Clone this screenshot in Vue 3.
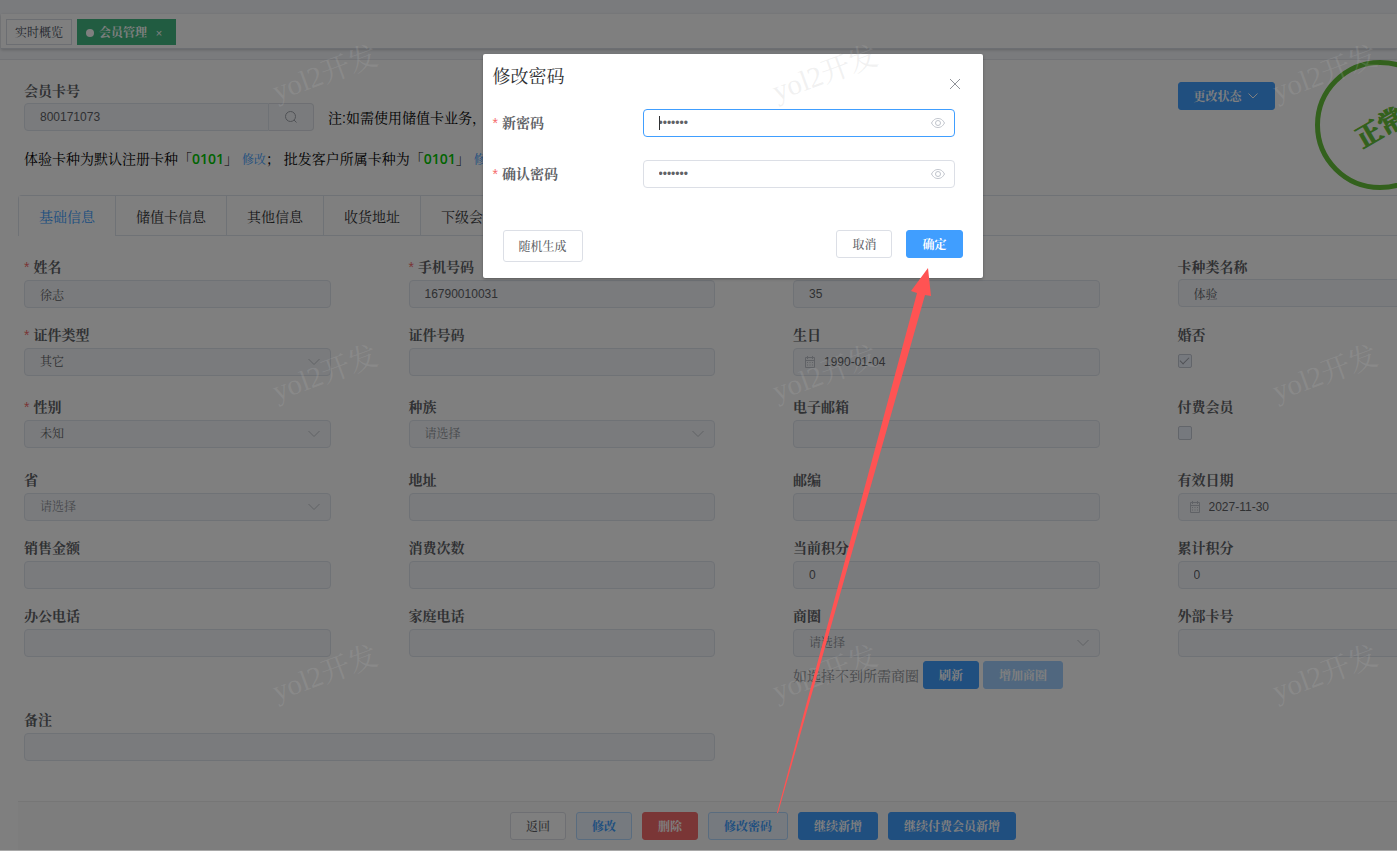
<script setup>
import { ref } from 'vue'

const cardNo = ref('800171073')
const newPassword = ref('1234567')
const confirmPassword = ref('1234567')

const tabs = ['基础信息', '储值卡信息', '其他信息', '收货地址', '下级会员']

const rows = [
  { kind: 'r68', cells: [
    { label: '姓名', required: true, value: '徐志' },
    { label: '手机号码', required: true, value: '16790010031' },
    { label: '年龄', value: '35' },
    { label: '卡种类名称', value: '体验', raised: true },
  ] },
  { kind: 'r72', cells: [
    { label: '证件类型', required: true, type: 'select', value: '其它' },
    { label: '证件号码', value: '' },
    { label: '生日', type: 'date', value: '1990-01-04' },
    { label: '婚否', type: 'check', value: true },
  ] },
  { kind: 'r73', cells: [
    { label: '性别', required: true, type: 'select', value: '未知' },
    { label: '种族', type: 'select', value: '请选择', empty: true },
    { label: '电子邮箱', value: '' },
    { label: '付费会员', type: 'check', value: false },
  ] },
  { kind: 'r68', cells: [
    { label: '省', type: 'select', value: '请选择', empty: true },
    { label: '地址', value: '' },
    { label: '邮编', value: '' },
    { label: '有效日期', type: 'date', value: '2027-11-30' },
  ] },
  { kind: 'r68', cells: [
    { label: '销售金额', value: '' },
    { label: '消费次数', value: '' },
    { label: '当前积分', value: '0' },
    { label: '累计积分', value: '0' },
  ] },
  { kind: 'r104', cells: [
    { label: '办公电话', value: '' },
    { label: '家庭电话', value: '' },
    { label: '商圈', type: 'select', value: '请选择', empty: true, area: true },
    { label: '外部卡号', value: '' },
  ] },
]

const marks = [0, 1, 2, 3, 4, 5, 6, 7, 8]
</script>

<template>
  <div class="page">
    <div class="navbar"></div>
    <nav class="tags">
      <a href="#" class="tag">实时概览</a>
      <a href="#" class="tag active"><i class="dot"></i>会员管理<span class="x">×</span></a>
    </nav>

    <main class="main">
      <section class="head">
        <div class="head-left">
          <label class="label" for="card">会员卡号</label>
          <div class="card-row">
            <div class="card-search">
              <input id="card" v-model="cardNo" class="field" disabled />
              <button class="search" type="button" aria-label="搜索">
                <svg viewBox="0 0 14 14"><circle cx="6.500" cy="6.500" r="5" /><path d="M10 10l2.500 2.500" /></svg>
              </button>
            </div>
            <p class="note">注:如需使用储值卡业务，</p>
          </div>
        </div>
        <div class="head-right">
          <button class="btn primary status" type="button">更改状态
            <svg viewBox="0 0 12 12"><path d="M1.500 3.500l4.500 4.500 4.500-4.500" /></svg>
          </button>
          <div class="stamp"><span>正常</span></div>
        </div>
      </section>

      <p class="kinds">
        体验卡种为默认注册卡种<span>「</span><b>0101</b><span>」</span> <a href="#">修改</a>；
        <span>批发客户所属卡种为「</span><b>0101</b><span>」</span> <a href="#">修改</a>
      </p>

      <div class="tabs" role="tablist">
        <button v-for="(t, i) in tabs" :key="t" type="button" role="tab" class="tab" :class="{ on: i === 0 }">{{ t }}</button>
      </div>

      <form class="form" @submit.prevent>
        <div v-for="(row, r) in rows" :key="r" class="row" :class="row.kind">
          <div v-for="(c, k) in row.cells" :key="c.label" class="cell">
            <label class="label" :class="{ raised: c.raised }" :for="`f${r}-${k}`"><i v-if="c.required">*</i>{{ c.label }}</label>
            <div v-if="c.type === 'select'" class="wrap">
              <select :id="`f${r}-${k}`" class="field" :class="{ empty: c.empty }" disabled><option>{{ c.value }}</option></select>
              <svg class="chev" viewBox="0 0 12 12"><path d="M.5 3L6 8.500 11.500 3" /></svg>
            </div>
            <div v-else-if="c.type === 'date'" class="wrap date">
              <svg class="cal" viewBox="0 0 12 12"><path d="M1.500 1.500h9v10h-9zM1.500 4.500h9M3.500 0v3M8.500 0v3M3 6.500h1M5.500 6.500h1M8 6.500h1M3 9h1M5.500 9h1M8 9h1" /></svg>
              <input :id="`f${r}-${k}`" class="field" :value="c.value" disabled />
            </div>
            <input v-else-if="c.type === 'check'" :id="`f${r}-${k}`" type="checkbox" class="check" :checked="c.value" disabled />
            <input v-else :id="`f${r}-${k}`" class="field" :value="c.value" disabled />
            <div v-if="c.area" class="area">
              <span>如选择不到所需商圈</span>
              <button class="btn primary" type="button">刷新</button>
              <button class="btn primary faded" type="button">增加商圈</button>
            </div>
          </div>
        </div>
        <div class="row">
          <div class="cell wide">
            <label class="label" for="remark">备注</label>
            <input id="remark" class="field" disabled />
          </div>
        </div>
      </form>

      <footer class="footer">
        <button class="btn" type="button">返回</button>
        <button class="btn plain" type="button">修改</button>
        <button class="btn danger" type="button">删除</button>
        <button class="btn plain" type="button">修改密码</button>
        <button class="btn primary" type="button">继续新增</button>
        <button class="btn primary" type="button">继续付费会员新增</button>
      </footer>
    </main>
    <div class="mask"></div>

    <section class="dialog" role="dialog" aria-labelledby="dlg-title">
      <header>
        <h2 id="dlg-title">修改密码</h2>
        <button type="button" class="close" aria-label="关闭">
          <svg viewBox="0 0 12 12"><path d="M1 1l10 10M11 1L1 11" /></svg>
        </button>
      </header>
      <div class="pw-row">
        <label class="label" for="pw1"><i>*</i>新密码</label>
        <div class="wrap pw focused">
          <input id="pw1" v-model="newPassword" type="password" class="field" />
          <i class="caret"></i>
          <svg class="eye" viewBox="0 0 16 12"><path d="M1.500 6C3.500 2.500 5.500 1.500 8 1.500s4.500 1 6.500 4.500c-2 3.500-4 4.500-6.500 4.500S3.500 9.500 1.500 6z" /><circle cx="8" cy="6" r="2.500" /></svg>
        </div>
      </div>
      <div class="pw-row">
        <label class="label" for="pw2"><i>*</i>确认密码</label>
        <div class="wrap pw">
          <input id="pw2" v-model="confirmPassword" type="password" class="field" />
          <svg class="eye" viewBox="0 0 16 12"><path d="M1.500 6C3.500 2.500 5.500 1.500 8 1.500s4.500 1 6.500 4.500c-2 3.500-4 4.500-6.500 4.500S3.500 9.500 1.500 6z" /><circle cx="8" cy="6" r="2.500" /></svg>
        </div>
      </div>
      <div class="dlg-foot">
        <button type="button" class="btn large">随机生成</button>
        <div class="right">
          <button type="button" class="btn">取消</button>
          <button type="button" class="btn primary">确定</button>
        </div>
      </div>
    </section>

    <div class="marks" aria-hidden="true"><div v-for="m in marks" :key="m" class="mark"><span>yol2开发</span></div></div>
    <svg class="arrow" viewBox="0 0 170 560" aria-hidden="true"><path d="M158 1L141 24l6 2L7 546h1L155 28l6 1z" /></svg>
  </div>
</template>

<style>
body { margin: 0; background: #fff; }
html, body { overflow: hidden; }
</style>

<style scoped>
* { box-sizing: border-box; }
.page { position: relative; height: 100vh; overflow: hidden; display: flex; flex-direction: column; background: #f5f7fb; font-family: "Liberation Sans", "Noto Serif CJK SC", "Noto Sans CJK SC", sans-serif; font-size: 14px; color: #303133; }
button, input, select { font-family: inherit; margin: 0; }
a { text-decoration: none; color: #409eff; }
p { margin: 0; }
.navbar { flex: none; height: 14px; }
.tags { flex: none; height: 35px; margin-left: 1px; display: flex; align-items: center; gap: 5px; padding: 2px 5px 0; background: #fff; border-bottom: 1px solid #d8dce5; box-shadow: 0 1px 3px rgba(0, 0, 0, .2); }
.tag { height: 26px; line-height: 26px; padding: 0 8px; font-size: 12px; border: 1px solid #d8dce5; color: #495060; }
.tag.active { display: flex; align-items: center; padding-top: 2px; background: #42b983; border-color: #42b983; color: #fff; font-weight: 700; }
.dot { width: 8px; height: 8px; margin-right: 5px; border-radius: 50%; background: #fff; }
.x { width: 16px; margin-left: 4px; text-align: center; font-size: 11px; font-weight: 400; }
.main { flex: 1; display: flex; flex-direction: column; margin-top: 10px; padding-left: 18px; border-top: 1px solid #e4e7ed; background: #fff; }
.head { flex: none; display: grid; grid-template-columns: repeat(4, 1fr); width: 1544px; height: 85px; padding: 21px 0 0 6px; }
.head-left { grid-column: span 3; }
.head-right { position: relative; padding-top: 1px; }
.label { display: block; height: 20px; line-height: 20px; font-size: 14px; font-weight: 700; color: #606266; white-space: nowrap; }
.label i { font-style: normal; font-weight: 400; color: #f56c6c; margin-right: 4px; }
.card-row { display: flex; align-items: center; gap: 14px; margin-top: 2px; }
.card-search { display: flex; width: 290px; }
.card-search .field { flex: 1; border-radius: 4px 0 0 4px; }
.search { width: 45px; border: 1px solid #dcdfe6; border-left: 0; border-radius: 0 4px 4px 0; background: #f5f7fa; padding: 0; }
svg { fill: none; stroke: currentColor; }
.search svg { width: 14px; height: 14px; display: block; margin: auto; color: #a0a4ac; }
.note { font-size: 14px; white-space: nowrap; color: #000; }
.field { display: block; width: 100%; min-width: 0; height: 28px; padding: 0 15px; border: 1px solid #dfe4ed; border-radius: 4px; background: #f5f7fa; font-size: 12px; color: #606266; opacity: 1; outline: 0; appearance: none; }
.field.empty { color: #8f939b; }
.btn { height: 28px; padding: 1px 15px 0; border: 1px solid #dcdfe6; border-radius: 3px; background: #fff; color: #606266; font-size: 12px; font-weight: 500; line-height: 1; white-space: nowrap; }
.btn.primary, .btn.danger, .btn.plain { font-weight: 700; }
.btn.primary { background: #409eff; border-color: #409eff; color: #fff; }
.btn.plain { background: #ecf5ff; border-color: #b3d8ff; color: #409eff; }
.btn.danger { background: #f56c6c; border-color: #f56c6c; color: #fff; }
.btn.primary.faded { background: #a0cfff; border-color: #a0cfff; }
.btn.large { height: 32px; }
.status svg { width: 12px; height: 12px; vertical-align: -1px; margin-left: 2px; }
.stamp { position: absolute; left: 137px; top: -21px; width: 130px; height: 130px; border: 5px solid #67c23a; border-radius: 50%; display: flex; align-items: center; justify-content: center; color: #67c23a; font-size: 26px; font-weight: 700; -webkit-text-stroke: 1px #67c23a; }
.stamp span { transform: rotate(-30deg); white-space: nowrap; }
.kinds { height: 20px; line-height: 20px; margin: 4px 0 26px 6px; color: #000; white-space: nowrap; }
.kinds b { color: #00c800; font-family: "Open Sans", sans-serif; font-weight: 600; }
.kinds a { font-size: 12px; }
.tabs { flex: none; display: flex; height: 41px; border: 1px solid #dfe4ed; border-right: 0; border-radius: 4px 0 0; }
.tab { height: 40px; padding: 0 20px; border: 0; border-right: 1px solid #dfe4ed; background: transparent; font-size: 14px; color: #303133; }
.tab.on { color: #409eff; background: #fff; }
.form { flex: none; padding: 21px 0 0 6px; width: 1544px; }
.row { display: grid; grid-template-columns: repeat(4, 1fr); }
.r68 { height: 68px; }
.r72 { height: 72px; }
.r73 { height: 73px; }
.r104 { height: 104px; }
.cell { padding-right: 78px; }
.cell .label { margin-bottom: 3px; }
.cell .label.raised { margin-bottom: 2px; }
.wide { grid-column: span 2; }
.wrap { position: relative; }
.chev { position: absolute; right: 11px; top: 8px; width: 12px; height: 12px; color: #c0c4cc; }
.date .field { padding-left: 30px; }
.cal { position: absolute; left: 11px; top: 8px; width: 12px; height: 12px; color: #c0c4cc; }
.check { appearance: none; display: block; width: 14px; height: 14px; margin: 9px 0 0; border: 1px solid #c5cad5; border-radius: 2px; background: #edf2fc; }
.check:checked::after { content: ""; display: block; width: 4px; height: 8px; margin: 0 auto; border: solid #a0a4ac; border-width: 0 1px 1px 0; transform: rotate(45deg); }
.area { display: flex; align-items: center; gap: 4px; margin-top: 4px; color: #909399; white-space: nowrap; }
.footer { flex: 1; margin-top: 40px; padding: 10px 0 0 111px; display: flex; align-items: flex-start; justify-content: center; gap: 10px; border-top: 1px solid #ececec; background: #fafafa; }
.mask { position: absolute; inset: 0 0 1px; background: rgba(0, 0, 0, .5); }
.page::after { content: ""; position: absolute; inset: auto 0 0; height: 1px; background: #a8a8a8; }
.dialog { position: absolute; left: 50%; top: 54px; width: 500px; margin-left: -216px; padding: 10px 20px 16px 10px; border-radius: 2px; background: #fff; box-shadow: 0 1px 3px rgba(0, 0, 0, .3); }
.dialog header { display: flex; justify-content: space-between; height: 45px; }
.dialog h2 { margin: 0; font-size: 18px; font-weight: 400; line-height: 26px; }
.close { width: 16px; height: 16px; margin-top: 12px; padding: 0; border: 0; background: none; color: #909399; }
.close svg { width: 12px; height: 12px; display: block; margin: auto; }
.pw-row { display: flex; align-items: center; height: 28px; margin-bottom: 23px; }
.pw-row .label { width: 150px; }
.pw { width: 312px; }
.pw .field { background: #fff; border-color: #dcdfe6; }
.pw.focused .field { border-color: #409eff; }
.eye { position: absolute; right: 9px; top: 8px; width: 16px; height: 12px; color: #c0c4cc; }
.caret { position: absolute; left: 16px; top: 7px; width: 1px; height: 14px; background: #303133; }
.dlg-foot { display: flex; justify-content: space-between; align-items: flex-start; margin-top: 42px; padding-left: 10px; }
.right { display: flex; gap: 14px; }
.marks { position: absolute; left: 75px; top: 0; width: 1500px; display: grid; grid-template-columns: repeat(3, 500px); grid-auto-rows: 300px; pointer-events: none; }
.mark { display: flex; align-items: flex-start; justify-content: center; padding-top: 51px; font-family: "Liberation Serif", "Noto Serif CJK SC", "Noto Sans CJK SC", serif; font-size: 29px; color: rgba(184, 184, 184, .2); line-height: 44px; }
.mark span { transform: rotate(-20deg); }
.arrow { position: absolute; left: 770px; top: 267px; width: 170px; height: 560px; pointer-events: none; }
.arrow path { fill: #ff5353; stroke: none; }
</style>
